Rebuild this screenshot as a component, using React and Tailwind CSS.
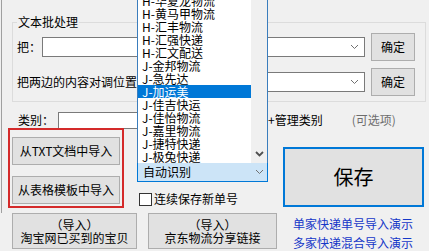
import React from "react";

const items = [
  "H-华夏龙物流",
  "H-黄马甲物流",
  "H-汇丰物流",
  "H-汇强快递",
  "H-汇文配送",
  "J-金邦物流",
  "J-急先达",
  "J-加运美",
  "J-佳吉快运",
  "J-佳怡物流",
  "J-嘉里物流",
  "J-捷特快递",
  "J-极兔快递",
];

function Chevron({ bold = false }) {
  return (
    <svg width="9" height="6" viewBox="0 0 9 6" className="shrink-0">
      <path
        d="M1 1 L4.5 4.5 L8 1"
        fill="none"
        stroke={bold ? "#505050" : "#707070"}
        strokeWidth={bold ? 1.8 : 1}
      />
    </svg>
  );
}

function Btn({ children, className = "" }) {
  return (
    <div
      className={
        "flex items-center justify-center bg-[#e1e1e1] border border-[#adadad] text-black " +
        className
      }
    >
      {children}
    </div>
  );
}

export default function App() {
  return (
    <div
      className="w-[429px] h-[251px] bg-[#f0f0f0] overflow-hidden text-[12px] text-black"
      style={{ fontFamily: '"Noto Sans CJK SC", "Noto Sans", sans-serif' }}
    >
      {/* upper section with left frame line */}
      <div className="ml-[1px] h-[213px] border-l border-[#a0a0a0] flex flex-col">
        {/* group box */}
        <div className="ml-[10px] mt-[22px] w-[414px] border border-[#dcdcdc] flex flex-col pb-[5px]">
          <div className="self-start -mt-[8px] ml-[4px] px-[1px] bg-[#f0f0f0] leading-[14px]">
            文本批处理
          </div>
          <div className="flex items-center h-[28px] mt-[4px] pl-[4px]">
            <div className="w-[25px] leading-[14px]">把：</div>
            <div className="w-[323px] h-[20px] bg-white border border-[#7a7a7a] flex items-center justify-end pr-[5px]">
              <Chevron />
            </div>
            <Btn className="ml-[6px] w-[44px] h-[28px]">确定</Btn>
          </div>
          <div className="flex items-center h-[28px] mt-[7px] pl-[4px]">
            <div className="w-[122px] leading-[14px] whitespace-nowrap">把两边的内容对调位置</div>
            <div className="w-[226px] h-[20px] bg-white border border-[#7a7a7a] flex items-center justify-end pr-[5px]">
              <Chevron />
            </div>
            <Btn className="ml-[6px] w-[44px] h-[28px]">确定</Btn>
          </div>
        </div>

        {/* category row */}
        <div className="flex items-center h-[16px] mt-[10px] pl-[16px] whitespace-nowrap">
          <div className="w-[40px] leading-[14px]">类别：</div>
          <div className="w-[200px] h-[17px] bg-white border border-[#7a7a7a]" />
          <div className="ml-[10px] leading-[14px]">+管理类别</div>
          <div className="ml-[29px] leading-[14px] text-[#6d6d6d]">(可选项)</div>
        </div>

        {/* middle area */}
        <div className="flex items-start">
          <div className="ml-[6px] w-[116px] h-[80px] border-2 border-[#d42a2a] flex flex-col px-[2px] pt-[7px] gap-[11px]">
            <Btn className="w-full h-[28px]">从TXT文档中导入</Btn>
            <Btn className="w-full h-[28px]">从表格模板中导入</Btn>
          </div>

          <div className="ml-[13px] w-[131px] flex flex-col">
            <div className="relative mt-[34px] h-[20px] bg-[#cce4f7] border border-[#0078d7] flex items-center justify-between pl-[5px] pr-[3px]">
              <span className="leading-[14px]">自动识别</span>
              <Chevron />
              {/* open drop-down list */}
              <div className="absolute bottom-full -left-[1px] w-[131px] bg-white border-l border-r border-t border-[#3a7dbd] flex">
                <div className="w-[113px] flex flex-col">
                  {items.map((t) => (
                    <div
                      key={t}
                      className={
                        "h-[13px] leading-[13px] pl-[4px] whitespace-nowrap overflow-hidden " +
                        (t === "J-加运美" ? "bg-[#0078d7] text-white" : "text-black")
                      }
                    >
                      {t}
                    </div>
                  ))}
                </div>
                <div className="w-[16px] bg-[#f0f0f0] flex items-end justify-center pb-[6px]">
                  <Chevron bold />
                </div>
              </div>
            </div>
            <div className="flex items-center mt-[10px] ml-[2px] whitespace-nowrap">
              <div className="w-[13px] h-[13px] bg-white border border-[#333333]" />
              <span className="ml-[2px] leading-[14px]">连续保存新单号</span>
            </div>
          </div>

          <div className="ml-[15px] mt-[19px] w-[141px] h-[60px] bg-[#e1e1e1] border-2 border-[#0078d7] flex items-center justify-center text-[20px] leading-[24px]">
            保存
          </div>
        </div>
      </div>

      {/* bottom row */}
      <div className="flex items-start whitespace-nowrap">
        <Btn className="ml-[12px] w-[125px] h-[36px] flex-col leading-[13px]">
          <span>（导入）</span>
          <span>淘宝网已买到的宝贝</span>
        </Btn>
        <Btn className="ml-[11px] w-[129px] h-[36px] flex-col leading-[13px]">
          <span>（导入）</span>
          <span>京东物流分享链接</span>
        </Btn>
        <div className="ml-[16px] mt-[1px] flex flex-col text-[#1537c8] leading-[19px]">
          <span>单家快递单号导入演示</span>
          <span>多家快递混合导入演示</span>
        </div>
      </div>
    </div>
  );
}
